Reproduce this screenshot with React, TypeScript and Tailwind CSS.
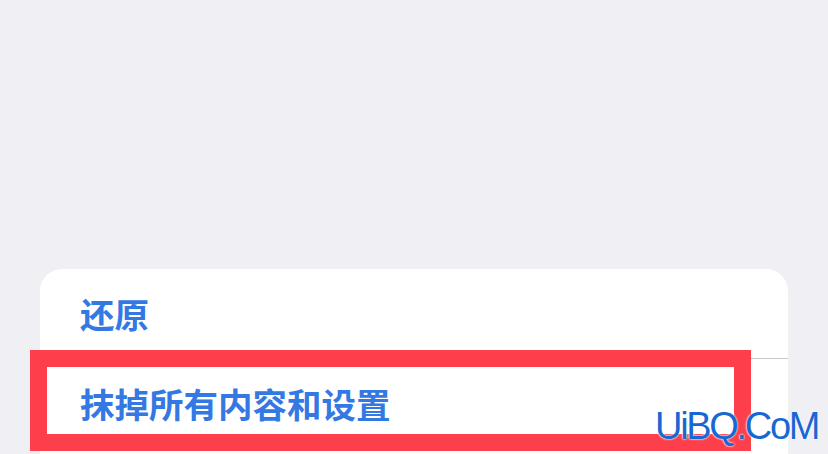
import React from "react";

export default function App() {
  const cjk = { fontFamily: '"Noto Sans CJK SC", "Noto Sans", sans-serif' };
  return (
    <div className="relative h-[454px] w-[828px] overflow-hidden bg-[#efeff4] px-[40px] pt-[269px]">
      <div className="h-full rounded-t-[22px] bg-white">
        <div className="flex h-[89px] items-center pl-[40px]">
          <span className="text-[34.5px] font-semibold leading-none text-[#3479e3]" style={cjk}>
            还原
          </span>
        </div>
        <div className="ml-[40px] h-px bg-[#c8c7cc]" />
        <div className="flex h-[88px] items-center pl-[40px]">
          <span className="text-[34.5px] font-semibold leading-none text-[#3479e3]" style={cjk}>
            抹掉所有内容和设置
          </span>
        </div>
      </div>
      <div className="absolute left-[30px] top-[350px] h-[101px] w-[721px] border-[17px] border-[#fd3f4b]" />
      <div
        className="absolute left-[655px] top-[407px] text-[38px] leading-none tracking-[-2.3px] text-[#1868d3] [text-shadow:0_0_2px_#fff,0_0_2px_#fff]"
        style={{ fontFamily: '"Liberation Sans", Arial, sans-serif' }}
      >
        UiBQ.CoM
      </div>
    </div>
  );
}
